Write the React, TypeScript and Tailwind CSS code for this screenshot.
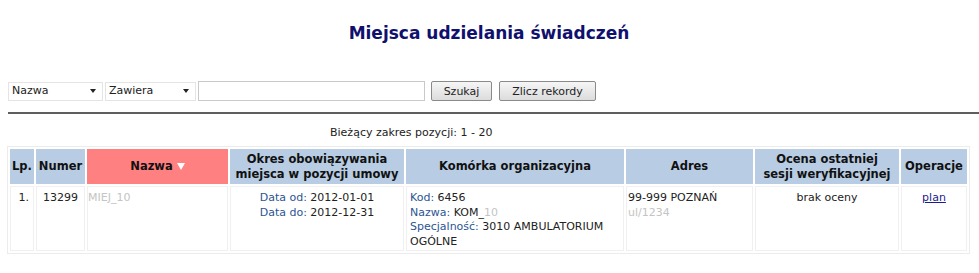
const font = { fontFamily: '"DejaVu Sans", Verdana, sans-serif' };

function FakeSelect({ label, width }: { label: string; width: string }) {
  return (
    <div className={`${width} h-[19px] flex items-center justify-between border border-[#e4e4e4] bg-white pl-[3px] pr-[6px] text-[11px] text-[#222]`}>
      <span>{label}</span>
      <span className="w-0 h-0 border-l-[3.5px] border-r-[3.5px] border-t-[4px] border-l-transparent border-r-transparent border-t-[#222]" />
    </div>
  );
}

function Btn({ children, width }: { children: string; width: string }) {
  return (
    <button className={`${width} h-[20px] rounded-[2px] border border-[#8a8a8a] bg-gradient-to-b from-[#f6f6f6] to-[#dcdcdc] text-[11px] text-[#222] leading-none`}>
      {children}
    </button>
  );
}

const th = "bg-[#b8cce4] font-bold text-[11.5px] text-[#111] leading-[15px] text-center align-middle";
const td = "bg-white border border-[#f0f0f0] text-[11px] text-[#222] leading-[14.7px] align-top pt-[4px]";
const label = "text-[#2c5592]";

export default function App() {
  return (
    <div className="bg-white w-[979px] h-[273px] overflow-hidden" style={font}>
      <div className="w-[962px] ml-[8px] pt-[22px] text-center">
        <h1 className="text-[17px] font-bold text-[#10106e] leading-[22px]">Miejsca udzielania świadczeń</h1>
      </div>

      <div className="flex items-center ml-[8px] mt-[37px] gap-[2px]">
        <FakeSelect label="Nazwa" width="w-[95px]" />
        <FakeSelect label="Zawiera" width="w-[91px]" />
        <div className="w-[227px] h-[20px] border border-[#c9c9c9] bg-white" />
        <div className="flex gap-[7px] ml-[4px]">
          <Btn width="w-[61px]">Szukaj</Btn>
          <Btn width="w-[97px]">Zlicz rekordy</Btn>
        </div>
      </div>

      <div className="ml-[8px] mt-[11px] h-[2px] bg-[#5e5e5e]" />

      <div className="ml-[8px] w-[962px] pl-[322px] mt-[12px] text-[11px] text-[#222] leading-[14px]">
        Bieżący zakres pozycji: 1 - 20
      </div>

      <table className="ml-[7px] mt-[6px] border border-[#ececec] border-separate border-spacing-[2px]" style={{ width: 963 }}>
        <thead>
          <tr className="h-[35px]">
            <th className={`${th} w-[24px]`}>Lp.</th>
            <th className={`${th} w-[49px]`}>Numer</th>
            <th className={`${th} w-[141px] bg-[#ff8080]`}>
              <span className="inline-flex items-center gap-[4px]">
                Nazwa
                <span className="w-0 h-0 border-l-[4.5px] border-r-[4.5px] border-t-[7px] border-l-transparent border-r-transparent border-t-white" />
              </span>
            </th>
            <th className={`${th} w-[174px]`}>
              Okres obowiązywania
              <br />
              miejsca w pozycji umowy
            </th>
            <th className={`${th} w-[218px]`}>Komórka organizacyjna</th>
            <th className={`${th} w-[127px]`}>Adres</th>
            <th className={`${th} w-[144px]`}>
              Ocena ostatniej
              <br />
              sesji weryfikacyjnej
            </th>
            <th className={th}>Operacje</th>
          </tr>
        </thead>
        <tbody>
          <tr className="h-[64px]">
            <td className={`${td} text-right pr-[4px]`}>1.</td>
            <td className={`${td} text-center`}>13299</td>
            <td className={`${td} pl-0`}>
              <span className="text-[#c4c4c4]">MIEJ_10</span>
            </td>
            <td className={`${td} text-center`}>
              <div className="inline-block text-left">
                <div>
                  <span className={label}>Data od:</span> 2012-01-01
                </div>
                <div>
                  <span className={label}>Data do:</span> 2012-12-31
                </div>
              </div>
            </td>
            <td className={`${td} pl-[3px]`}>
              <div>
                <span className={label}>Kod:</span> 6456
              </div>
              <div>
                <span className={label}>Nazwa:</span> KOM_<span className="text-[#c4c4c4]">10</span>
              </div>
              <div>
                <span className={label}>Specjalność:</span> 3010 AMBULATORIUM
              </div>
              <div>OGÓLNE</div>
            </td>
            <td className={`${td} pl-[1px]`}>
              <div>99-999 POZNAŃ</div>
              <div className="text-[#c4c4c4]">ul/1234</div>
            </td>
            <td className={`${td} text-center`}>brak oceny</td>
            <td className={`${td} text-center`}>
              <a href="#" className="text-[#1c1c8c] underline">plan</a>
            </td>
          </tr>
        </tbody>
      </table>
    </div>
  );
}
